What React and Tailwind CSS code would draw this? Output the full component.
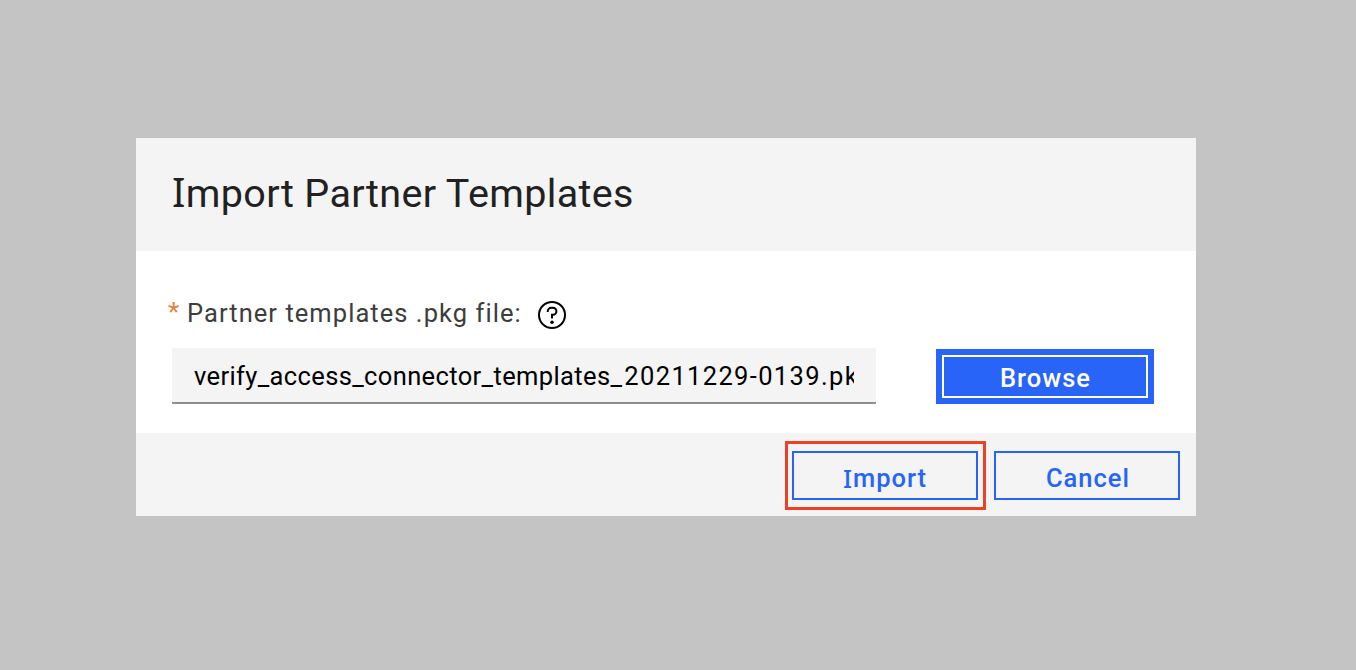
const SlabI = () => <span className="font-['Noto_Sans',sans-serif]">I</span>;

function HelpIcon() {
  return (
    <svg viewBox="0 0 28 28" className="mt-[3px] ml-[17px] h-7 w-7 shrink-0" fill="none" stroke="#000" strokeWidth="2">
      <circle cx="14" cy="14" r="13" />
      <path d="M9.7 11V10.4A3.6 3.6 0 0 1 13.3 6.8H14.9A3.5 3.5 0 0 1 14.9 13.8H14V17.4" />
      <circle cx="14" cy="21.3" r="1.8" fill="#000" stroke="none" />
    </svg>
  );
}

export default function App() {
  return (
    <main className="flex h-[670px] w-[1356px] items-start bg-[#c4c4c4] pt-[138px] pl-[136px] font-[Roboto,sans-serif]">
      <section className="flex h-[378px] w-[1060px] flex-col bg-white">
        <header className="h-[113px] bg-[#f4f4f4] pt-[30px] pl-9">
          <h1 className="text-[39.5px] leading-[48px] font-normal tracking-[0.36px] whitespace-nowrap text-[#212121]">
            <SlabI />mport Partner Templates
          </h1>
        </header>

        <div className="h-[182px] pt-[47px] pl-8">
          <div className="flex h-[50px] items-start text-[25.5px] leading-[32px]">
            <span className="w-[19px] text-[26px] leading-[28px] text-[#e0813c]">*</span>
            <label htmlFor="package" className="w-[334px] text-[25.5px] leading-[30px] tracking-[1.05px] whitespace-nowrap text-[#3d3d3d]">
              Partner templates .pkg file:
            </label>
            <HelpIcon />
          </div>
          <div className="ml-1 flex items-start">
            <div className="h-14 w-[704px] rounded-b-[1px] border-b-2 border-[#8d8d8d] bg-[#f4f4f4] px-[22px]">
              <div id="package" className="w-[660px] overflow-hidden text-[25.5px] leading-[56px] tracking-[0.37px] whitespace-nowrap text-black">
                verify_access_connector_templates_
                <span className="ml-[2px] tracking-[1.35px]">20211229-0139.pkg</span>
              </div>
            </div>
            <button className="mt-px ml-[60px] h-[55px] w-[218px] bg-[#2864f7] p-1.5 text-[25.5px] font-medium tracking-[1px] text-white">
              <span className="flex h-[43px] items-center justify-center border-2 border-white pt-1 pl-px">Browse</span>
            </button>
          </div>
        </div>

        <footer className="flex h-[83px] items-start justify-end gap-2 bg-[#f4f4f4] pt-2 pr-4 text-[25.5px] font-medium tracking-[1px] text-[#2864f7]">
          <div className="h-[69px] w-[201px] border-3 border-[#ee4027] pt-[7px] pl-1">
            <button className="flex h-[49px] w-[186px] items-center justify-center border-2 border-[#2864f7] pt-1.5">
              <SlabI />mport
            </button>
          </div>
          <button className="mt-[10px] flex h-[49px] w-[186px] items-center justify-center border-2 border-[#2864f7] pt-1.5 pl-0.5">
            Cancel
          </button>
        </footer>
      </section>
    </main>
  );
}
